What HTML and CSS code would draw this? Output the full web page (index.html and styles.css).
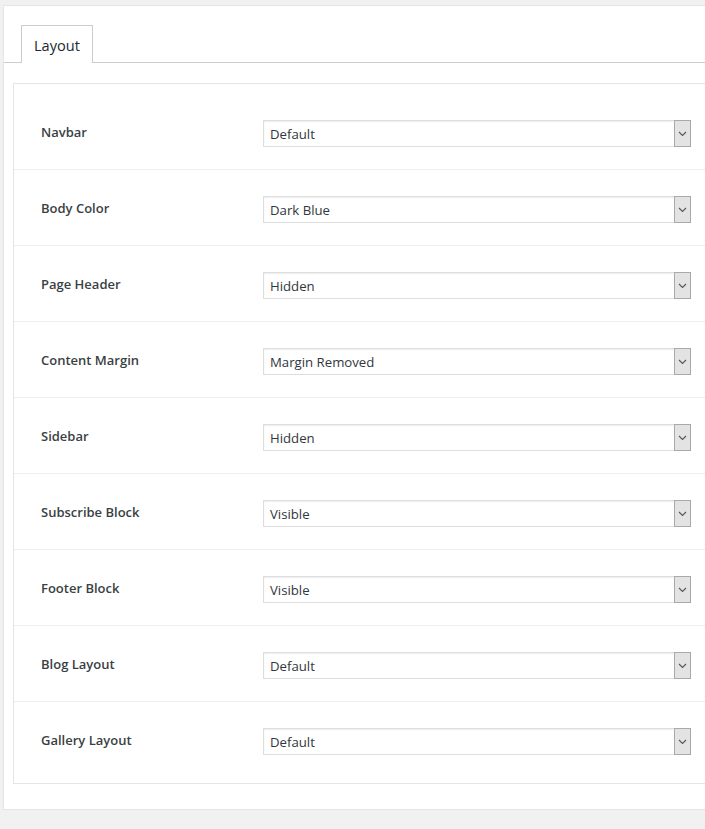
FILE: index.html
```html
<!DOCTYPE html>
<html>
<head>
<meta charset="utf-8">
<link rel="stylesheet" href="styles.css">
</head>
<body>
<div class="panel">
  <div class="tabs">
    <div class="tab">Layout</div>
  </div>
  <div class="box">
    <div class="row"><div class="label">Navbar</div><div class="select"><span class="value">Default</span><span class="arrow"><svg width="9" height="6" viewBox="0 0 9 6"><path d="M1 1 L4.5 4.5 L8 1" fill="none" stroke="#555" stroke-width="1.1"/></svg></span></div></div>
    <div class="row"><div class="label">Body Color</div><div class="select"><span class="value">Dark Blue</span><span class="arrow"><svg width="9" height="6" viewBox="0 0 9 6"><path d="M1 1 L4.5 4.5 L8 1" fill="none" stroke="#555" stroke-width="1.1"/></svg></span></div></div>
    <div class="row"><div class="label">Page Header</div><div class="select"><span class="value">Hidden</span><span class="arrow"><svg width="9" height="6" viewBox="0 0 9 6"><path d="M1 1 L4.5 4.5 L8 1" fill="none" stroke="#555" stroke-width="1.1"/></svg></span></div></div>
    <div class="row"><div class="label">Content Margin</div><div class="select"><span class="value">Margin Removed</span><span class="arrow"><svg width="9" height="6" viewBox="0 0 9 6"><path d="M1 1 L4.5 4.5 L8 1" fill="none" stroke="#555" stroke-width="1.1"/></svg></span></div></div>
    <div class="row"><div class="label">Sidebar</div><div class="select"><span class="value">Hidden</span><span class="arrow"><svg width="9" height="6" viewBox="0 0 9 6"><path d="M1 1 L4.5 4.5 L8 1" fill="none" stroke="#555" stroke-width="1.1"/></svg></span></div></div>
    <div class="row"><div class="label">Subscribe Block</div><div class="select"><span class="value">Visible</span><span class="arrow"><svg width="9" height="6" viewBox="0 0 9 6"><path d="M1 1 L4.5 4.5 L8 1" fill="none" stroke="#555" stroke-width="1.1"/></svg></span></div></div>
    <div class="row"><div class="label">Footer Block</div><div class="select"><span class="value">Visible</span><span class="arrow"><svg width="9" height="6" viewBox="0 0 9 6"><path d="M1 1 L4.5 4.5 L8 1" fill="none" stroke="#555" stroke-width="1.1"/></svg></span></div></div>
    <div class="row"><div class="label">Blog Layout</div><div class="select"><span class="value">Default</span><span class="arrow"><svg width="9" height="6" viewBox="0 0 9 6"><path d="M1 1 L4.5 4.5 L8 1" fill="none" stroke="#555" stroke-width="1.1"/></svg></span></div></div>
    <div class="row"><div class="label">Gallery Layout</div><div class="select"><span class="value">Default</span><span class="arrow"><svg width="9" height="6" viewBox="0 0 9 6"><path d="M1 1 L4.5 4.5 L8 1" fill="none" stroke="#555" stroke-width="1.1"/></svg></span></div></div>
  </div>
</div>
</body>
</html>
```
FILE: styles.css
```css
html, body {
  margin: 0;
  padding: 0;
  overflow: hidden;
}
body {
  background: #f1f1f1;
  font-family: "Open Sans", "Noto Sans", sans-serif;
  color: #32373c;
  width: 705px;
  height: 829px;
}
.panel {
  margin: 5px 0 0 3px;
  background: #fff;
  border: 1px solid #e5e5e5;
  border-right: none;
  padding-bottom: 25px;
  box-sizing: border-box;
}
.tabs {
  display: flex;
  align-items: flex-end;
  padding: 19px 0 0 17px;
  border-bottom: 1px solid #ccc;
  height: 37px;
}
.tab {
  box-sizing: border-box;
  height: 38px;
  margin-bottom: -1px;
  padding: 0 12px;
  border: 1px solid #ccc;
  border-bottom: none;
  background: #fff;
  font-size: 14.6px;
  font-weight: 400;
  color: #23282d;
  line-height: 38px;
}
.box {
  margin: 20px 0 0 9px;
  border: 1px solid #e5e5e5;
  border-right: none;
  padding: 10px 0 6px;
}
.row {
  display: flex;
  align-items: flex-start;
  height: 75px;
  padding-left: 27px;
  border-bottom: 1px solid #eee;
}
.row:last-child {
  border-bottom: none;
}
.label {
  width: 222px;
  padding-top: 29px;
  font-size: 13px;
  font-weight: 600;
  color: #3a3f44;
  line-height: 18px;
}
.select {
  margin-top: 26px;
  width: 428px;
  height: 27px;
  box-sizing: border-box;
  border: 1px solid #ddd;
  box-shadow: inset 0 1px 2px rgba(0,0,0,0.07);
  display: flex;
  align-items: center;
  justify-content: space-between;
  background: #fff;
}
.value {
  padding-left: 6px;
  font-size: 13.2px;
  color: #32373c;
}
.arrow {
  box-sizing: border-box;
  width: 17px;
  height: 27px;
  margin: -1px -1px -1px 0;
  border: 1px solid #a9a9a9;
  background: #e3e3e3;
  display: flex;
  align-items: center;
  justify-content: center;
}
```
